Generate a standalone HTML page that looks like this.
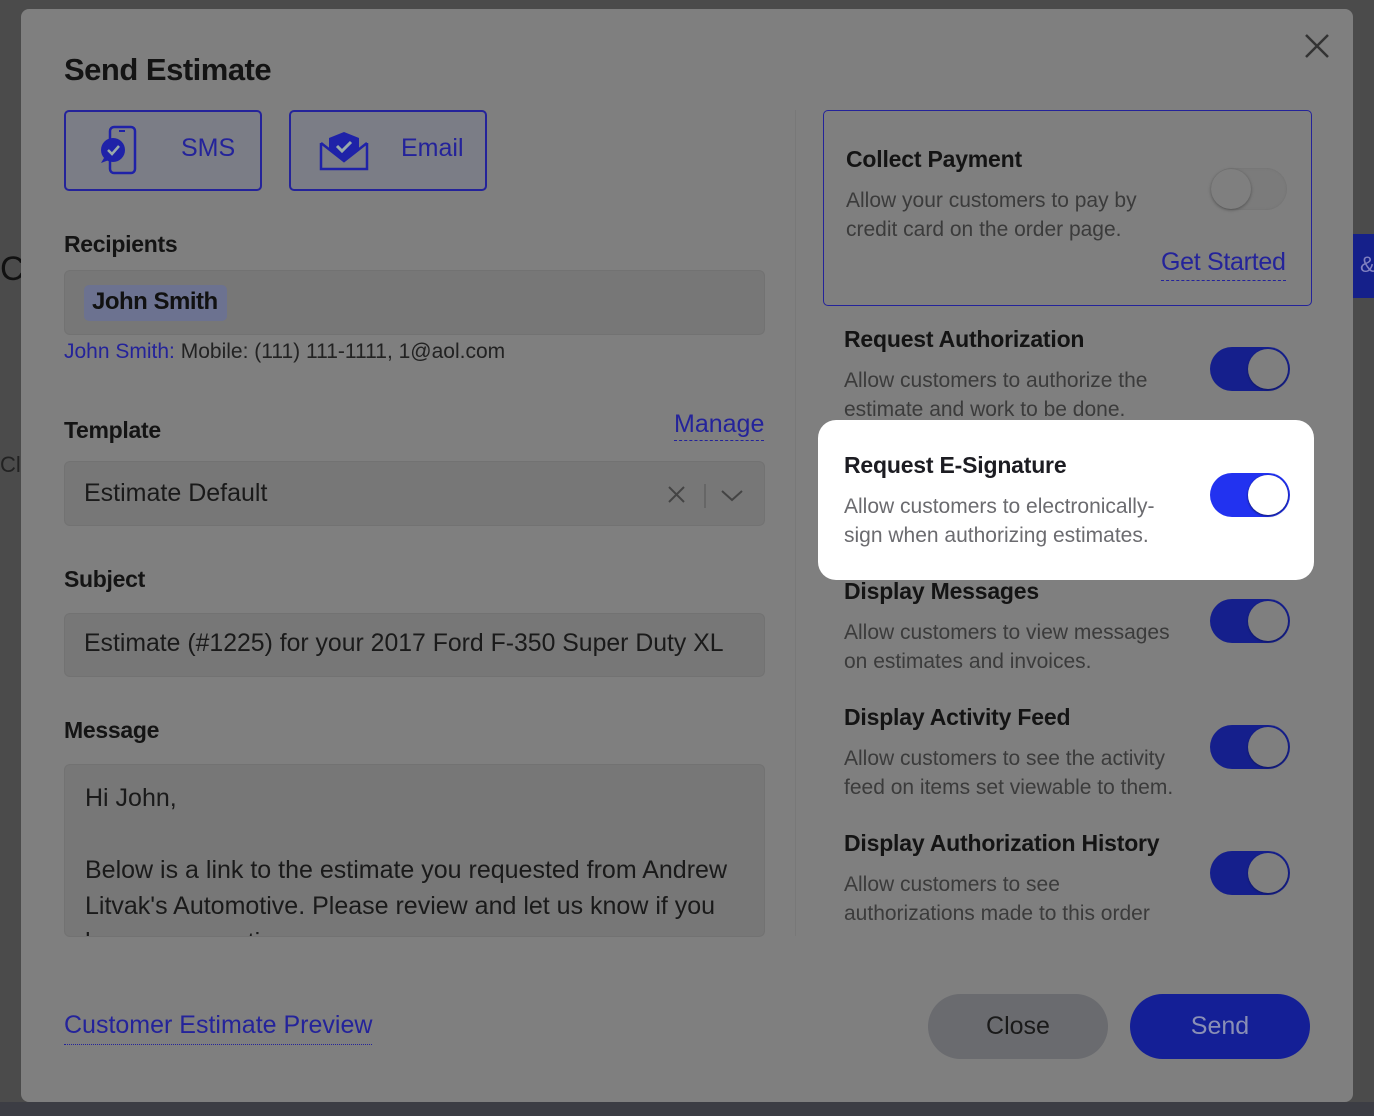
<!DOCTYPE html>
<html><head><meta charset="utf-8"><style>
*{box-sizing:border-box;margin:0;padding:0}
body{width:1374px;height:1116px;background:#4b4b4b;font-family:"Liberation Sans",sans-serif;position:relative;overflow:hidden;color:#111}
.a{position:absolute}
.modal{left:21px;top:9px;width:1332px;height:1093px;background:#7f7f7f;border-radius:8px}
.lbl{font-size:23px;color:#141414;font-weight:bold;letter-spacing:-0.3px}
.inp{background:#777;border:1px solid #727272;border-radius:6px}
.blue{color:#24239a}
.desc{font-size:21px;color:#3b3b3b;line-height:29px}
.h{font-size:23px;color:#141414;font-weight:bold;letter-spacing:-0.2px}
.tg{width:80px;height:44px;border-radius:22px;background:#151f8c}
.tg::after{content:"";position:absolute;right:2px;top:2px;width:40px;height:40px;border-radius:50%;background:#7f7f7f;box-shadow:0 1px 2px rgba(0,0,0,.3)}
</style></head><body>
<div class="a" style="left:0;top:1102px;width:1374px;height:14px;background:#3c3d44"></div>
<div class="a" style="left:1353px;top:234px;width:21px;height:64px;background:#15208a"></div>
<div class="a" style="left:1360px;top:252px;font-size:22px;color:#8080c0">&amp;</div>
<div class="a" style="left:0;top:250px;font-size:34px;color:#111">C</div>
<div class="a" style="left:0;top:452px;font-size:22px;color:#222">Clo</div>
<div class="a modal"></div>
<svg class="a" style="left:1304px;top:33px" width="26" height="26"><path d="M2 2L24 24M24 2L2 24" stroke="#333" stroke-width="2.5"/></svg>
<div class="a" style="left:64px;top:52px;font-size:31px;color:#141414;font-weight:bold;letter-spacing:-0.5px">Send Estimate</div>
<div class="a" style="left:64px;top:110px;width:198px;height:81px;border:2px solid #24239a;border-radius:5px;background:#7b7d86"></div>
<svg class="a" style="left:98px;top:125px" width="42" height="50" viewBox="0 0 42 50"><rect x="12" y="2" width="25" height="46" rx="4" fill="none" stroke="#1f22a8" stroke-width="2.5"/><rect x="21" y="5" width="6" height="2" fill="#1f22a8"/><circle cx="15" cy="25" r="12" fill="#1f22a8"/><path d="M6 33L3 38L11 35Z" fill="#1f22a8"/><path d="M10 25L14 29L21 21" stroke="#9aa" stroke-width="2.5" fill="none"/></svg>
<div class="a blue" style="left:181px;top:134px;font-size:25px">SMS</div>
<div class="a" style="left:289px;top:110px;width:198px;height:81px;border:2px solid #24239a;border-radius:5px;background:#7b7d86"></div>
<svg class="a" style="left:318px;top:128px" width="52" height="44" viewBox="0 0 52 44"><path d="M3 15V41H49V15" fill="none" stroke="#1f22a8" stroke-width="2.5"/><path d="M3 15L26 33L49 15" fill="none" stroke="#1f22a8" stroke-width="2.5"/><path d="M11 10L26 4L41 10V22L26 34L11 22Z" fill="#1f22a8"/><path d="M19 18L24 23L33 14" stroke="#9aa" stroke-width="3" fill="none"/></svg>
<div class="a blue" style="left:401px;top:134px;font-size:25px">Email</div>
<div class="a lbl" style="left:64px;top:231px">Recipients</div>
<div class="a inp" style="left:64px;top:270px;width:701px;height:65px"></div>
<div class="a" style="left:84px;top:285px;width:143px;height:36px;background:#6c7290;border-radius:5px"></div>
<div class="a" style="left:92px;top:288px;font-size:24px;color:#111;font-weight:bold;letter-spacing:-0.5px">John Smith</div>
<div class="a" style="left:64px;top:340px;font-size:21px;color:#222"><span class="blue">John Smith:</span> Mobile: (111) 111-1111, 1@aol.com</div>
<div class="a lbl" style="left:64px;top:417px">Template</div>
<div class="a blue" style="left:674px;top:410px;font-size:25px;border-bottom:1px dashed #24239a;padding-bottom:1px">Manage</div>
<div class="a inp" style="left:64px;top:461px;width:701px;height:65px"></div>
<div class="a" style="left:84px;top:479px;font-size:25px;color:#1a1a1a">Estimate Default</div>
<svg class="a" style="left:666px;top:484px" width="80" height="24"><path d="M3 3L18 18M18 3L3 18" stroke="#444" stroke-width="2"/><path d="M39 0V24" stroke="#555" stroke-width="1"/><path d="M56 7L66 16L76 7" stroke="#444" stroke-width="2" fill="none"/></svg>
<div class="a lbl" style="left:64px;top:566px">Subject</div>
<div class="a inp" style="left:64px;top:613px;width:701px;height:64px"></div>
<div class="a" style="left:84px;top:630px;font-size:24.8px;color:#1a1a1a">Estimate (#1225) for your 2017 Ford F-350 Super Duty XL</div>
<div class="a lbl" style="left:64px;top:717px">Message</div>
<div class="a inp" style="left:64px;top:764px;width:701px;height:173px;overflow:hidden">
<div style="padding:15px 20px;font-size:25px;line-height:36px;color:#1a1a1a">Hi John,<br><div style="margin-top:36px">Below is a link to the estimate you requested from Andrew Litvak's Automotive. Please review and let us know if you have any questions.</div></div></div>
<div class="a" style="left:795px;top:110px;width:1px;height:826px;background:#787878"></div>
<div class="a" style="left:823px;top:110px;width:489px;height:196px;border:1.5px solid #24239a;border-radius:5px"></div>
<div class="a h" style="left:846px;top:146px">Collect Payment</div>
<div class="a desc" style="left:846px;top:186px">Allow your customers to pay by<br>credit card on the order page.</div>
<div class="a" style="left:1211px;top:168px;width:76px;height:42px;border-radius:21px;background:#7b7b7b;box-shadow:inset 0 0 2px #707070"></div>
<div class="a" style="left:1211px;top:169px;width:40px;height:40px;border-radius:50%;background:#7f7f7f;box-shadow:0 1px 3px rgba(0,0,0,.35)"></div>
<div class="a blue" style="left:1161px;top:248px;font-size:25px;border-bottom:1px dashed #24239a;padding-bottom:3px;letter-spacing:-0.3px">Get Started</div>
<div class="a h" style="left:844px;top:326px">Request Authorization</div>
<div class="a desc" style="left:844px;top:366px">Allow customers to authorize the<br>estimate and work to be done.</div>
<div class="a tg" style="left:1210px;top:347px"></div>
<div class="a" style="left:818px;top:420px;width:496px;height:160px;background:#fff;border-radius:18px"></div>
<div class="a h" style="left:844px;top:452px;color:#1c1c22">Request E-Signature</div>
<div class="a desc" style="left:844px;top:492px;color:#6b6b6f">Allow customers to electronically-<br>sign when authorizing estimates.</div>
<div class="a tg" style="left:1210px;top:473px;background:#2232f0"></div>
<div class="a" style="left:1248px;top:475px;width:40px;height:40px;border-radius:50%;background:#fff;box-shadow:0 1px 2px rgba(0,0,0,.3)"></div>
<div class="a h" style="left:844px;top:578px">Display Messages</div>
<div class="a desc" style="left:844px;top:618px">Allow customers to view messages<br>on estimates and invoices.</div>
<div class="a tg" style="left:1210px;top:599px"></div>
<div class="a h" style="left:844px;top:704px">Display Activity Feed</div>
<div class="a desc" style="left:844px;top:744px">Allow customers to see the activity<br>feed on items set viewable to them.</div>
<div class="a tg" style="left:1210px;top:725px"></div>
<div class="a h" style="left:844px;top:830px">Display Authorization History</div>
<div class="a desc" style="left:844px;top:870px">Allow customers to see<br>authorizations made to this order</div>
<div class="a tg" style="left:1210px;top:851px"></div>
<div class="a blue" style="left:64px;top:1011px;font-size:25px;border-bottom:1px dotted #24239a;padding-bottom:4px">Customer Estimate Preview</div>
<div class="a" style="left:928px;top:994px;width:180px;height:65px;border-radius:33px;background:#6a6b6f;text-align:center;line-height:65px;font-size:25px;color:#1a1a1a">Close</div>
<div class="a" style="left:1130px;top:994px;width:180px;height:65px;border-radius:33px;background:#141f96;text-align:center;line-height:65px;font-size:25px;color:#8a8fb5">Send</div>
</body></html>
